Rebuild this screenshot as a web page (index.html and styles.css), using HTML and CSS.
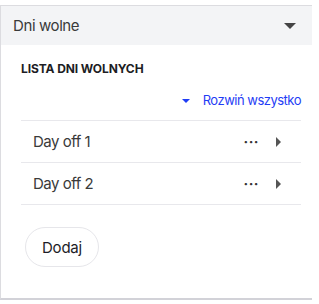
FILE: index.html
```html
<html>
  <head>
    <meta charset="utf-8">
    <title>Dni wolne</title>
    <meta name="viewport" content="width=device-width, initial-scale=1.0">
    <link rel="stylesheet" href="styles.css">
  </head>
  <body>
    <div class="panel">
      <div class="panel-head">
        <span>Dni wolne</span>
        <svg class="caret" width="12" height="6" viewBox="0 0 12 6"><path d="M0 0h12L6 6z" fill="#444"/></svg>
      </div>
      <div class="panel-body">
        <div class="title">LISTA DNI WOLNYCH</div>
        <div class="expand">
          <svg width="8" height="4" viewBox="0 0 8 4"><path d="M0 0h8L4 4z" fill="#1f3df5"/></svg>
          <span>Rozwiń wszystko</span>
        </div>
        <div class="list">
          <div class="row">
            <span class="name">Day off 1</span>
            <span class="dots">&middot;&middot;&middot;</span>
            <svg class="arrow" width="5" height="10" viewBox="0 0 5 10"><path d="M0 0l5 5-5 5z" fill="#555"/></svg>
          </div>
          <div class="row">
            <span class="name">Day off 2</span>
            <span class="dots">&middot;&middot;&middot;</span>
            <svg class="arrow" width="5" height="10" viewBox="0 0 5 10"><path d="M0 0l5 5-5 5z" fill="#555"/></svg>
          </div>
        </div>
        <button class="add">Dodaj</button>
      </div>
    </div>
  </body>
</html>
```

FILE: styles.css
```css
body {
  margin: 0;
  padding-top: 5px;
  font-family: "Inter", "Noto Sans", sans-serif;
  background: #fff;
}

.panel {
  width: 312px;
  height: 295px;
  border-top: 1px solid #dcdce0;
  border-left: 1px solid #dcdce0;
  border-bottom: 2px solid #d2d2d8;
  box-sizing: border-box;
}

.panel-head {
  height: 39px;
  background: #f3f4f6;
  display: flex;
  align-items: center;
  justify-content: space-between;
  padding: 0 16px 0 12px;
  font-size: 15px;
  color: #3a3a3a;
  letter-spacing: -0.4px;
}

.caret {
  margin-top: 1px;
}

.panel-body {
  padding: 16px 11px 0 20px;
}

.title {
  font-size: 12px;
  font-weight: 700;
  color: #1d1d24;
  letter-spacing: -0.1px;
}

.expand {
  display: flex;
  align-items: center;
  justify-content: flex-end;
  gap: 13px;
  margin-top: 16px;
  font-size: 13px;
  color: #1f3df5;
  letter-spacing: -0.5px;
}

.expand svg {
  margin-top: 2px;
}

.list {
  margin-top: 12px;
  border-top: 1px solid #e8e8ec;
}

.row {
  display: flex;
  align-items: center;
  height: 41px;
  border-bottom: 1px solid #e8e8ec;
  padding: 0 20px 0 12px;
}

.name {
  flex: 1;
  font-size: 15px;
  color: #3a3a3a;
  letter-spacing: -0.5px;
}

.dots {
  font-size: 14px;
  font-weight: 700;
  color: #333;
  letter-spacing: 0.5px;
  margin-right: 17px;
}

.add {
  margin-top: 22px;
  margin-left: 4px;
  width: 74px;
  height: 40px;
  border: 1px solid #e6e6ea;
  border-radius: 20px;
  background: #fff;
  font-family: inherit;
  font-size: 15px;
  color: #1d1d28;
  letter-spacing: -0.2px;
  cursor: pointer;
}
```
